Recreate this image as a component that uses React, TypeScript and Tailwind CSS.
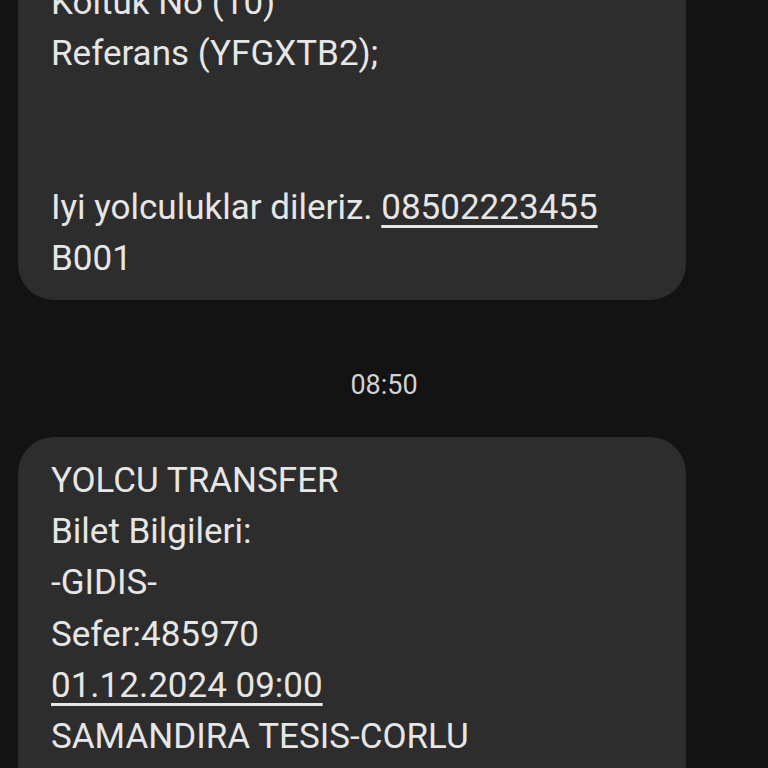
import React from "react";

const Line: React.FC<{ children?: React.ReactNode }> = ({ children }) => (
  <div className="h-[51.3px] whitespace-nowrap">{children ?? "\u00a0"}</div>
);

const Link: React.FC<{ children: React.ReactNode }> = ({ children }) => (
  <span className="underline decoration-[2.5px] underline-offset-[6px]">{children}</span>
);

const Bubble: React.FC<{ className?: string; children: React.ReactNode }> = ({ className, children }) => (
  <div className={`ml-[18px] w-[668px] rounded-[36px] bg-[#2d2d2d] px-[33px] ${className ?? ""}`}>
    {children}
  </div>
);

export default function App() {
  return (
    <div
      className="h-[768px] w-[768px] overflow-hidden bg-[#131313] text-[35px] leading-[51.3px] text-[#e6e6e6]"
      style={{ fontFamily: "Roboto, 'Noto Sans', sans-serif" }}
    >
      <Bubble className="-mt-[40px] pt-[17px] pb-[15px]">
        <Line>Koltuk No (10)</Line>
        <Line>Referans (YFGXTB2);</Line>
        <Line />
        <Line />
        <Line>
          Iyi yolculuklar dileriz. <Link>08502223455</Link>
        </Line>
        <Line>B001</Line>
      </Bubble>

      <div className="h-[137px] pt-[71px] text-center text-[27px] leading-[28px] text-[#d2d2d2]">08:50</div>

      <Bubble className="pt-[18px] pb-[60px]">
        <Line>YOLCU TRANSFER</Line>
        <Line>Bilet Bilgileri:</Line>
        <Line>-GIDIS-</Line>
        <Line>Sefer:485970</Line>
        <Line>
          <Link>01.12.2024 09:00</Link>
        </Line>
        <Line>SAMANDIRA TESIS-CORLU</Line>
      </Bubble>
    </div>
  );
}
